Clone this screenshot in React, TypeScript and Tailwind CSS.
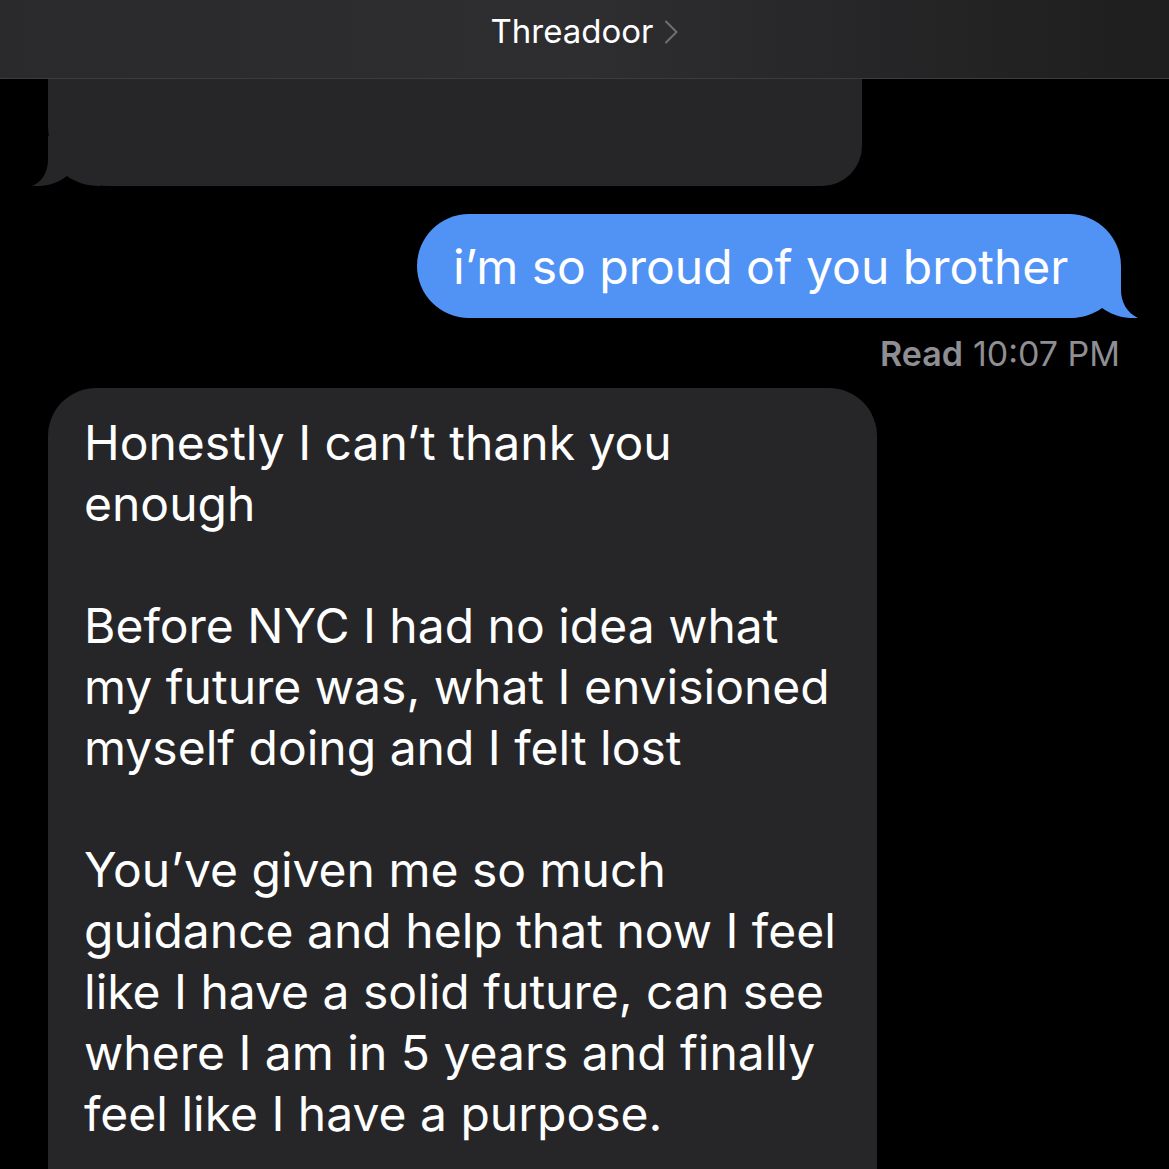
const SF = "font-['Inter','Liberation_Sans',sans-serif]";

const gray = [
  'Honestly I can\u2019t thank you',
  'enough',
  '',
  'Before NYC I had no idea what',
  'my future was, what I envisioned',
  'myself doing and I felt lost',
  '',
  'You\u2019ve given me so much',
  'guidance and help that now I feel',
  'like I have a solid future, can see',
  'where I am in 5 years and finally',
  'feel like I have a purpose.',
];

export default function App() {
  return (
    <div className={`h-[1169px] w-[1169px] overflow-hidden bg-black ${SF}`}>
      {/* nav bar */}
      <div className="flex h-[79px] items-start justify-center border-b border-[#3c3c3e] bg-gradient-to-r from-[#2a2a2c] via-[#2e2e30] to-[#1e1e1f] pt-[10px]">
        <span className="text-[33px] leading-[42px] text-white">Threadoor</span>
        <svg className="ml-[10px] mt-[10px]" width="15" height="24" viewBox="0 0 15 24" fill="none">
          <path d="M2,1.5 L12.5,12 L2,22.5" stroke="#707074" strokeWidth="2" strokeLinecap="round" strokeLinejoin="round" />
        </svg>
      </div>

      {/* previous incoming bubble, cut by the header */}
      <div className="relative ml-[48px] h-[107px] w-[814px] rounded-br-[40px] rounded-bl-[60px] bg-[#262629]">
        <svg className="absolute bottom-0 left-[-16px]" width="70" height="50" viewBox="0 0 70 50">
          <path d="M16,0 L16,24 C16,36 10,46 0,50 C14,51 26,47 35,40 C43,46 54,50 68,50 L68,0 Z" fill="#262629" />
        </svg>
      </div>

      {/* outgoing bubble */}
      <div className="mt-[28px] flex justify-end pr-[48px]">
        <div className="relative flex h-[104px] w-[704px] items-center rounded-full bg-[#5192f5] pl-[36px]">
          <span className="whitespace-nowrap text-[48px] leading-[61px] text-white">i’m so proud of you brother</span>
          <svg className="absolute bottom-0 right-[-18px]" width="70" height="52" viewBox="0 0 70 52">
            <path d="M52,0 L52,24 C52,36 58,47 69,52 C55,53 43,49 33,42 C25,48 14,52 0,52 L0,0 Z" fill="#5192f5" />
          </svg>
        </div>
      </div>

      <div className="mt-[18px] flex justify-end pr-[49px] text-[34px] leading-[36px] text-[#8e8e93]">
        <span className="font-semibold">Read</span>
        <span className="ml-[10px]">10:07 PM</span>
      </div>

      {/* incoming long bubble */}
      <div className="ml-[48px] mt-[16px] w-[829px] rounded-t-[48px] bg-[#262629] pb-[40px] pl-[36px] pt-[24px]">
        {gray.map((line, i) => (
          <div key={i} className="h-[61px] whitespace-nowrap text-[48px] leading-[61px] text-white">
            {line}
          </div>
        ))}
      </div>
    </div>
  );
}
